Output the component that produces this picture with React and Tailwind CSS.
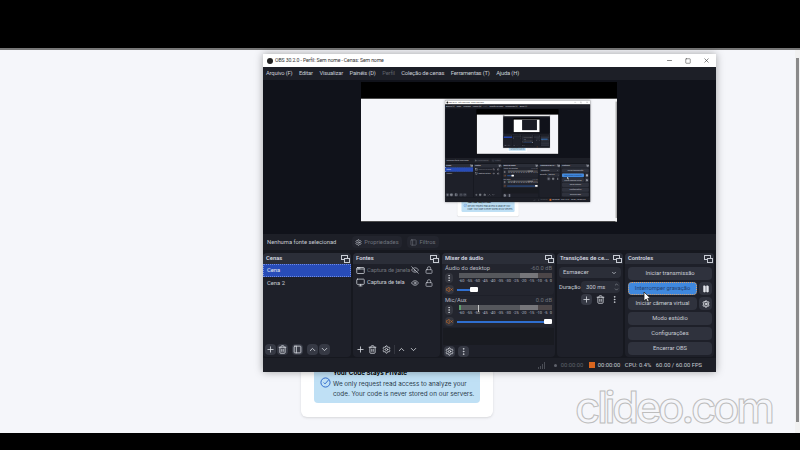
import React from "react";
import {
  AppWindow,
  ChevronDown,
  ChevronUp,
  EllipsisVertical,
  Eye,
  EyeOff,
  Lock,
  Minus,
  Monitor,
  PanelLeft,
  Pause,
  Plus,
  Settings,
  Square,
  Trash2,
  VolumeX,
  X,
} from "lucide-react";

const menus = [
  "Arquivo (F)",
  "Editar",
  "Visualizar",
  "Painéis (D)",
  "Perfil",
  "Coleção de cenas",
  "Ferramentas (T)",
  "Ajuda (H)",
];

const ticks = ["-60", "-55", "-50", "-45", "-40", "-35", "-30", "-25", "-20", "-15", "-10", "-5", "0"];

const DockIcon = () => (
  <svg width="9" height="8" viewBox="0 0 9 8" className="text-[#c8ccd4] shrink-0" fill="none" stroke="currentColor">
    <rect x="0.5" y="0.5" width="6" height="4" />
    <rect x="3.5" y="3.5" width="5" height="4" fill="#2b2e38" />
  </svg>
);

const Dock = ({ title, className, children }) => (
  <div className={`flex flex-col bg-[#1e2029] rounded-sm overflow-hidden ${className}`}>
    <div className="flex items-center justify-between h-[11px] shrink-0 bg-[#2b2e38] pl-[3px] pr-[1px] font-semibold text-[#d6d9e0]">
      <span>{title}</span>
      <DockIcon />
    </div>
    {children}
  </div>
);

const ToolBtn = ({ icon: Icon, active, className = "" }) => (
  <div className={`flex items-center justify-center w-[11px] h-[11px] shrink-0 rounded-sm ${active ? "bg-[#363944]" : ""} ${className}`}>
    <Icon size={9} strokeWidth={2.2} className="text-[#d6d9e0]" />
  </div>
);

const SourceRow = ({ icon: Icon, label, dim, eye: EyeIcon }) => (
  <div className="flex items-center h-[12.5px] pl-[3px] pr-[7px]">
    <Icon size={9} className="text-[#d6d9e0] shrink-0" />
    <span className={`flex-1 ml-[2px] whitespace-nowrap tracking-[-0.1px] ${dim ? "text-[#6f737c]" : "text-[#c8ccd4]"}`}>{label}</span>
    <EyeIcon size={8} className="text-[#c8ccd4] shrink-0" />
    <Lock size={8} className="text-[#c8ccd4] shrink-0 ml-[6px]" />
  </div>
);

const Channel = ({ name, db, fill, mark, depth }) => (
  <div className="flex flex-col bg-[#23252e] pl-[2px] pr-[2px] h-[31px] rounded-sm">
    <div className="flex justify-between leading-[8px] text-[#b9bcc5]">
      <span>{name}</span>
      <span className="text-[#6f737c]">{db}</span>
    </div>
    <div className="flex mt-[1px] gap-[6px]">
      <div className="flex items-center justify-center w-[8px] h-[10px] bg-[#34363f] rounded-sm shrink-0">
        <EllipsisVertical size={8} className="text-[#e0e2e8]" />
      </div>
      <div className="flex-1 relative">
        <div className="flex h-[5px]">
          {mark && <div className="w-[2px] bg-[#5c9e6c]" />}
          <div className="flex-1 bg-[#55575c]" />
          <div className="w-[18px] bg-[#76767a]" />
          <div className="w-[14px] bg-[#4c4648]" />
        </div>
        {mark && <div className="absolute left-[19px] top-0 w-[1px] h-[7px] bg-[#c9c9c9]" />}
        {/* the deepest copy of the window is too small for the scale labels */}
        {depth > 0 ? (
          <div className="flex justify-between text-[4px] leading-[6px] text-[#b5b8c0]">
            {ticks.map((t) => (
              <span key={t}>{t}</span>
            ))}
          </div>
        ) : (
          <div className="h-[6px]" />
        )}
      </div>
    </div>
    <div className="flex items-center gap-[3px] mt-[1px]">
      <div className="flex items-center justify-center w-[9px] h-[9px] bg-[#34363f] rounded-sm shrink-0">
        <VolumeX size={7} className="text-[#d9762b]" />
      </div>
      <div className="flex-1 flex items-center h-[5px]">
        <div className="h-[2px] bg-[#2f6fd0]" style={{ width: fill }} />
        <div className="w-[8px] h-[5px] bg-white rounded-[1px]" />
      </div>
    </div>
  </div>
);

const CtrlBtn = ({ label, active }) => (
  <div
    className={`grow flex items-center justify-center h-[13px] rounded-sm ${
      active ? "bg-[#3f88de] border border-dotted border-[#e0a060] text-[#24406e]" : "bg-[#2f323d] text-[#c8ccd4]"
    }`}
  >
    {label}
  </div>
);

const ObsWindow = ({ depth }) => (
  <div className="absolute left-[263px] top-[54px] w-[453px] h-[318px] flex flex-col bg-[#1a1c24] shadow-[0_0_8px_rgba(0,0,0,0.35)] text-[5.8px] font-['Roboto',sans-serif]">
    {/* title bar */}
    <div className="flex items-center h-[13px] shrink-0 bg-white pl-[4px] pr-[6px] text-[#333]">
      <div className="w-[6px] h-[6px] rounded-full bg-[#222] mr-[2px]" />
      <span className="flex-1 text-[5.2px] tracking-[-0.13px]">OBS 30.2.0 - Perfil: Sem nome - Cenas: Sem nome</span>
      <Minus size={7} className="mr-[12px]" />
      <Square size={6} className="mr-[12px]" />
      <X size={7} />
    </div>

    {/* menu */}
    <div className="flex items-center h-[13px] shrink-0 gap-[6.5px] bg-[#1d1f27] pl-[3px] text-[#c8ccd4] tracking-[-0.17px]">
      {menus.map((m) => (
        <span key={m} className={m === "Perfil" ? "text-[#5f626b]" : ""}>
          {m}
        </span>
      ))}
    </div>

    {/* preview */}
    <div className="relative h-[154px] shrink-0 bg-[#10121a]">
      <div className="absolute left-[98px] top-[2px] w-[256px] h-[140px] overflow-hidden bg-black">
        {depth > 0 ? (
          <div className="absolute left-0 top-[1px] w-[800px] h-[450px] origin-top-left scale-[0.32]">
            <Screen depth={depth - 1} />
          </div>
        ) : (
          <div className="mt-[16px] h-[124px] pt-[2px] pl-[84px] bg-white">
            <div className="w-[145px] h-[101px] bg-[#1a1c24]" />
          </div>
        )}
      </div>
    </div>

    {/* source bar */}
    <div className="flex items-center h-[16px] shrink-0 bg-[#1d1f27] pl-[4px] text-[#c8ccd4]">
      <span className="w-[85px] whitespace-nowrap">Nenhuma fonte selecionad</span>
      <div className="flex items-center justify-center gap-[2px] w-[50px] h-[12px] bg-[#23252e] rounded-sm text-[#6f737c]">
        <Settings size={7} className="text-[#c8ccd4]" />
        Propriedades
      </div>
      <div className="flex items-center justify-center gap-[2px] w-[32px] h-[12px] bg-[#23252e] rounded-sm ml-[5px] text-[#6f737c]">
        <PanelLeft size={7} />
        Filtros
      </div>
    </div>

    {/* docks */}
    <div className="flex flex-1 min-h-0 gap-[2px] pr-[2px] pt-[3px] pb-[1px] bg-[#16181f]">
      <Dock title="Cenas" className="w-[88px]">
        <div className="flex-1">
          <div className="flex items-center h-[13px] pl-[3px] bg-[#284cb8] text-[#e6e8ee] border border-dotted border-[#6f8be0]">Cena</div>
          <div className="flex items-center h-[13px] pl-[4px] text-[#c8ccd4]">Cena 2</div>
        </div>
        <div className="flex items-center h-[15px] pl-[2px] gap-[1px]">
          <ToolBtn icon={Plus} active />
          <ToolBtn icon={Trash2} active />
          <ToolBtn icon={PanelLeft} active className="ml-[3px]" />
          <ToolBtn icon={ChevronUp} active className="ml-[3px]" />
          <ToolBtn icon={ChevronDown} active />
        </div>
      </Dock>

      <Dock title="Fontes" className="w-[87px]">
        <div className="flex-1">
          <SourceRow icon={AppWindow} label="Captura de janela" dim eye={EyeOff} />
          <SourceRow icon={Monitor} label="Captura de tela" eye={Eye} />
        </div>
        <div className="flex items-center h-[15px] pl-[2px]">
          <ToolBtn icon={Plus} />
          <ToolBtn icon={Trash2} className="ml-[1px]" />
          <ToolBtn icon={Settings} className="ml-[3px]" />
          <div className="w-[1px] h-[9px] ml-[2px] bg-[#34363f]" />
          <ToolBtn icon={ChevronUp} className="ml-[1px]" />
          <ToolBtn icon={ChevronDown} className="ml-[1px]" />
        </div>
      </Dock>

      <Dock title="Mixer de áudio" className="w-[113px]">
        <div className="flex-1 flex flex-col gap-[1px] px-[1px]">
          <Channel name="Áudio do desktop" db="-60.0 dB" fill="13px" depth={depth} />
          <Channel name="Mic/Aux" db="0.0 dB" fill="87px" mark depth={depth} />
          <div className="h-[17px] bg-[#191b21]" />
        </div>
        <div className="flex items-center h-[14px] pl-[2px] gap-[3px]">
          <ToolBtn icon={Settings} active />
          <ToolBtn icon={EllipsisVertical} active />
        </div>
      </Dock>

      <Dock title="Transições de ce..." className="w-[66px]">
        <div className="flex items-center justify-between h-[11px] mx-[2px] mt-[3px] px-[4px] bg-[#2b2e38] rounded-sm text-[#c8ccd4]">
          Esmaecer
          <ChevronDown size={6} strokeWidth={3} />
        </div>
        <div className="flex items-center mt-[3px] pl-[2px] pr-[3px] text-[#c8ccd4]">
          <span className="w-[22px] shrink-0">Duração</span>
          <div className="flex flex-1 items-center justify-between h-[12px] pl-[5px] pr-[1px] bg-[#2b2e38] rounded-sm">
            300 ms
            <div className="flex flex-col">
              <ChevronUp size={5} />
              <ChevronDown size={5} />
            </div>
          </div>
        </div>
        <div className="flex justify-end gap-[3px] pr-[3px] mt-[0.5px]">
          <ToolBtn icon={Plus} active />
          <ToolBtn icon={Trash2} />
          <ToolBtn icon={EllipsisVertical} />
        </div>
      </Dock>

      <Dock title="Controles" className="flex-1">
        <div className="flex flex-col gap-[2px] pl-[3px] pr-[2px] pt-[3px]">
          <CtrlBtn label="Iniciar transmissão" />
          <div className="flex gap-[2px]">
            <CtrlBtn label="Interromper gravação" active />
            <div className="flex items-center justify-center w-[13px] h-[13px] shrink-0 bg-[#2f323d] rounded-sm">
              <Pause size={8} fill="#e6e8ee" className="text-[#e6e8ee]" />
            </div>
          </div>
          <div className="flex gap-[2px]">
            <CtrlBtn label="Iniciar câmera virtual" />
            <div className="flex items-center justify-center w-[13px] h-[13px] shrink-0 bg-[#2f323d] rounded-sm">
              <Settings size={8} strokeWidth={3} className="text-[#e6e8ee]" />
            </div>
          </div>
          <CtrlBtn label="Modo estúdio" />
          <CtrlBtn label="Configurações" />
          <CtrlBtn label="Encerrar OBS" />
        </div>
      </Dock>
    </div>

    {/* status bar */}
    <div className="flex items-center justify-end h-[14px] shrink-0 pr-[14px] bg-[#1d1f27] text-[#c8ccd4]">
      <svg width="7" height="7" viewBox="0 0 7 7" fill="#4a4d55" className="mr-[9px]">
        <rect x="0" y="5" width="1" height="2" />
        <rect x="2" y="4" width="1" height="3" />
        <rect x="4" y="2" width="1" height="5" />
        <rect x="6" y="0" width="1" height="7" />
      </svg>
      <div className="w-[3px] h-[3px] rounded-full bg-[#5f626b] mr-[4px]" />
      <span className="text-[#5f626b] w-[28px]">00:00:00</span>
      <div className="w-[6px] h-[6px] bg-[#d9661f] mr-[3px]" />
      <span className="w-[27px]">00:00:00</span>
      <span className="w-[31px]">CPU: 0.4%</span>
      <span>60.00 / 60.00 FPS</span>
    </div>

    {/* mouse pointer */}
    <svg width="9" height="12" viewBox="0 0 9 12" className="absolute left-[380px] top-[237px]">
      <path d="M1 1v9l2.2-2 1.4 3 1.6-.7-1.4-3H7.5z" fill="#fff" stroke="#222" strokeWidth="0.8" />
    </svg>
  </div>
);

const Screen = ({ depth }) => (
  <div className="relative flex flex-col w-[800px] h-[450px] bg-black overflow-hidden font-['Inter',sans-serif]">
    <div className="h-[48px] shrink-0 bg-black" />
    <div className="h-[2px] shrink-0 bg-[#777]" />
    <div className="flex-1 flex flex-col justify-end pl-[301px] pb-[16px] bg-[#f5f6fa] min-h-0">
      <div className="w-[192px] px-[13px] pb-[14px] bg-white rounded-md shadow-sm">
        <div className="w-[166px] h-[36px] pl-[6px] pt-[2px] bg-[#bfe0f5] rounded-sm flex gap-[2px]">
          <svg width="11" height="11" viewBox="0 0 24 24" fill="none" stroke="#2563c9" strokeWidth="2" className="mt-[8px] shrink-0">
            <circle cx="12" cy="12" r="10" />
            <path d="M8 12l3 3 8-9" />
          </svg>
          <div className="text-[#2a3a4a] text-[6.3px] leading-[10px] whitespace-nowrap">
            <div className="font-bold text-black leading-[9px]">Your Code Stays Private</div>
            <div className="mt-[1px]">We only request read access to analyze your</div>
            <div>code. Your code is never stored on our servers.</div>
          </div>
        </div>
      </div>
    </div>
    <div className="h-[17px] shrink-0 bg-black" />

    {/* browser scrollbar */}
    <div className="absolute right-0 top-[50px] w-[5px] h-[383px] pt-[8px] bg-[#f1f1f1]">
      <div className="ml-[1px] w-[3px] h-[364px] bg-[#8a8a8a]" />
    </div>

    <ObsWindow depth={depth} />

    {depth === 2 && (
      <div className="absolute left-[575px] top-[385px] text-[44px] leading-[44px] tracking-[-3.5px] font-medium text-transparent [-webkit-text-stroke:1px_#bdbdbd]">
        clideo.com
      </div>
    )}
  </div>
);

export default function App() {
  return <Screen depth={2} />;
}
